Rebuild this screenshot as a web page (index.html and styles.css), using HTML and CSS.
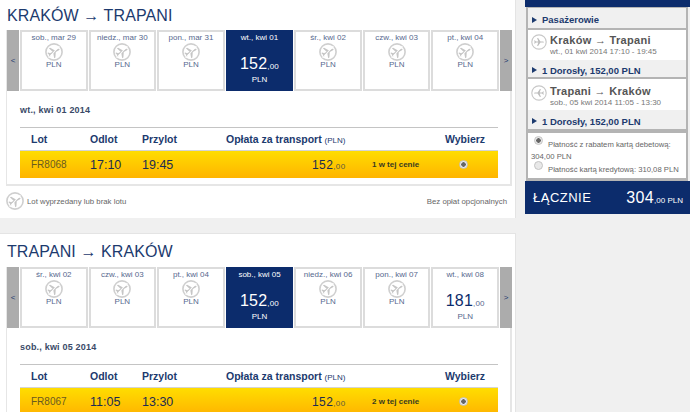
FILE: index.html
```html
<!DOCTYPE html>
<html lang="pl">
<head>
    <meta charset="UTF-8">
    <meta name="viewport" content="width=device-width, initial-scale=1.0">
    <title>Wybierz lot</title>
    <link rel="stylesheet" href="styles.css">
</head>
<body>
    <svg class="defs" width="0" height="0">
        <symbol id="plane-off" viewBox="0 0 18 18">
            <circle cx="9" cy="9" r="8.1" fill="#fff" stroke="#cfcfcf" stroke-width="1.6"/>
            <g transform="rotate(-28 9 9)">
                <path d="M2.6 6.8 L3.8 6.8 L5 8.2 L7.8 8.2 L6.2 3.4 L7.6 3.4 L10.6 8.2 L13.8 8.2 C15.8 8.3 15.8 9.8 13.8 9.8 L10.6 9.8 L7.6 14.6 L6.2 14.6 L7.8 9.8 L5 9.8 L3.8 11.2 L2.6 11.2 L3.4 9 Z" fill="#c6c6c6"/>
            </g>
            <path d="M3.6 15 L14.4 3" stroke="#fff" stroke-width="1.1"/>
        </symbol>
        <symbol id="plane-right" viewBox="0 0 18 18">
            <circle cx="9" cy="9" r="8.1" fill="#fff" stroke="#c8c8c8" stroke-width="1.3"/>
            <path d="M3.4 7.2 L4.4 7.2 L5.6 8.3 L8.2 8.3 L6.9 4.4 L8 4.4 L10.6 8.3 L13.4 8.3 C15 8.4 15 9.7 13.4 9.7 L10.6 9.7 L8 13.6 L6.9 13.6 L8.2 9.7 L5.6 9.7 L4.4 10.8 L3.4 10.8 L4.2 9 Z" fill="#bdbdbd"/>
        </symbol>
        <symbol id="plane-left" viewBox="0 0 18 18">
            <circle cx="9" cy="9" r="8.1" fill="#fff" stroke="#c8c8c8" stroke-width="1.3"/>
            <path d="M14.6 7.2 L13.6 7.2 L12.4 8.3 L9.8 8.3 L11.1 4.4 L10 4.4 L7.4 8.3 L4.6 8.3 C3 8.4 3 9.7 4.6 9.7 L7.4 9.7 L10 13.6 L11.1 13.6 L9.8 9.7 L12.4 9.7 L13.6 10.8 L14.6 10.8 L13.8 9 Z" fill="#bdbdbd"/>
        </symbol>
    </svg>

    <div class="page">
        <div class="main">
            <section class="leg">
                <h1>KRAKÓW → TRAPANI</h1>
                <div class="box">
                    <div class="days">
                        <a class="nav">&lt;</a>
                        <div class="day"><span class="date">sob., mar 29</span><svg class="off"><use href="#plane-off"/></svg><span class="cur">PLN</span></div>
                        <div class="day"><span class="date">niedz., mar 30</span><svg class="off"><use href="#plane-off"/></svg><span class="cur">PLN</span></div>
                        <div class="day"><span class="date">pon., mar 31</span><svg class="off"><use href="#plane-off"/></svg><span class="cur">PLN</span></div>
                        <div class="day selected"><span class="date">wt., kwi 01</span><span class="price">152<small>,00</small></span><span class="cur">PLN</span></div>
                        <div class="day"><span class="date">śr., kwi 02</span><svg class="off"><use href="#plane-off"/></svg><span class="cur">PLN</span></div>
                        <div class="day"><span class="date">czw., kwi 03</span><svg class="off"><use href="#plane-off"/></svg><span class="cur">PLN</span></div>
                        <div class="day"><span class="date">pt., kwi 04</span><svg class="off"><use href="#plane-off"/></svg><span class="cur">PLN</span></div>
                        <a class="nav">&gt;</a>
                    </div>
                    <div class="flights">
                        <h3>wt., kwi 01 2014</h3>
                        <div class="row head">
                            <span class="c-lot">Lot</span>
                            <span class="c-dep">Odlot</span>
                            <span class="c-arr">Przylot</span>
                            <span class="c-fare">Opłata za transport <em>(PLN)</em></span>
                            <span class="c-pick">Wybierz</span>
                        </div>
                        <div class="row flight">
                            <span class="c-lot">FR8068</span>
                            <span class="c-dep">17:10</span>
                            <span class="c-arr">19:45</span>
                            <span class="c-amount">152<small>,00</small></span>
                            <span class="c-left">1 w tej cenie</span>
                            <span class="c-radio"><i class="radio on"></i></span>
                        </div>
                    </div>
                </div>
                <div class="legend">
                    <span class="legend-item"><svg class="off"><use href="#plane-off"/></svg>Lot wyprzedany lub brak lotu</span>
                    <span>Bez opłat opcjonalnych</span>
                </div>
            </section>

            <section class="leg">
                <h1>TRAPANI → KRAKÓW</h1>
                <div class="box">
                    <div class="days">
                        <a class="nav">&lt;</a>
                        <div class="day"><span class="date">śr., kwi 02</span><svg class="off"><use href="#plane-off"/></svg><span class="cur">PLN</span></div>
                        <div class="day"><span class="date">czw., kwi 03</span><svg class="off"><use href="#plane-off"/></svg><span class="cur">PLN</span></div>
                        <div class="day"><span class="date">pt., kwi 04</span><svg class="off"><use href="#plane-off"/></svg><span class="cur">PLN</span></div>
                        <div class="day selected"><span class="date">sob., kwi 05</span><span class="price">152<small>,00</small></span><span class="cur">PLN</span></div>
                        <div class="day"><span class="date">niedz., kwi 06</span><svg class="off"><use href="#plane-off"/></svg><span class="cur">PLN</span></div>
                        <div class="day"><span class="date">pon., kwi 07</span><svg class="off"><use href="#plane-off"/></svg><span class="cur">PLN</span></div>
                        <div class="day"><span class="date">wt., kwi 08</span><span class="price">181<small>,00</small></span><span class="cur">PLN</span></div>
                        <a class="nav">&gt;</a>
                    </div>
                    <div class="flights">
                        <h3>sob., kwi 05 2014</h3>
                        <div class="row head">
                            <span class="c-lot">Lot</span>
                            <span class="c-dep">Odlot</span>
                            <span class="c-arr">Przylot</span>
                            <span class="c-fare">Opłata za transport <em>(PLN)</em></span>
                            <span class="c-pick">Wybierz</span>
                        </div>
                        <div class="row flight">
                            <span class="c-lot">FR8067</span>
                            <span class="c-dep">11:05</span>
                            <span class="c-arr">13:30</span>
                            <span class="c-amount">152<small>,00</small></span>
                            <span class="c-left">2 w tej cenie</span>
                            <span class="c-radio"><i class="radio on"></i></span>
                        </div>
                    </div>
                </div>
            </section>
        </div>

        <aside class="side">
            <div class="side-top"></div>
            <div class="side-box">
                <div class="bar first"><span class="tri"></span>Pasażerowie</div>
                <div class="trip">
                    <svg class="trip-icon"><use href="#plane-right"/></svg>
                    <div>
                        <div class="trip-name">Kraków → Trapani</div>
                        <div class="trip-time">wt., 01 kwi 2014 17:10 - 19:45</div>
                    </div>
                </div>
                <div class="bar"><span class="tri"></span>1 Dorosły, 152,00 PLN</div>
                <div class="trip back">
                    <svg class="trip-icon"><use href="#plane-left"/></svg>
                    <div>
                        <div class="trip-name">Trapani → Kraków</div>
                        <div class="trip-time">sob., 05 kwi 2014 11:05 - 13:30</div>
                    </div>
                </div>
                <div class="bar last"><span class="tri"></span>1 Dorosły, 152,00 PLN</div>
                <div class="pay">
                    <div class="pay-opt"><i class="radio on"></i>Płatność z rabatem kartą debetową: 304,00 PLN</div>
                    <div class="pay-opt"><i class="radio"></i>Płatność kartą kredytową: 310,08 PLN</div>
                </div>
            </div>
            <div class="total">
                <span class="total-label">ŁĄCZNIE</span>
                <span class="total-sum">304<small>,00 PLN</small></span>
            </div>
        </aside>
    </div>
</body>
</html>
```

FILE: styles.css
```css
* {
    box-sizing: border-box;
}
html, body {
    margin: 0;
    height: 100%;
}
body {
    background-color: #f0f0f0;
    font-family: "Liberation Sans", Arial, sans-serif;
    color: #0c2c6c;
    overflow: hidden;
}
.defs {
    display: block;
    height: 0;
}
.page {
    display: flex;
    gap: 9px;
    align-items: flex-start;
    height: 412px;
    overflow: hidden;
}
.main {
    width: 516px;
    height: 412px;
    flex: none;
    display: flex;
    flex-direction: column;
    gap: 15px;
    overflow: hidden;
}
.leg {
    background-color: #ffffff;
    border-right: 1px solid #e4e4e4;
    height: 218px;
    flex: none;
    padding: 0 3px 0 6px;
}
.leg + .leg {
    border-top: 1px solid #e4e4e4;
    height: 179px;
    overflow: hidden;
}
h1 {
    margin: 0;
    height: 30px;
    padding: 7px 0 0 1px;
    font-size: 16px;
    line-height: 18px;
    letter-spacing: .1px;
    font-weight: normal;
    color: #1c3a6e;
}
.leg + .leg h1 {
    height: 33px;
    padding-top: 9px;
}
.box {
    border: 2px solid #e6e6e6;
    border-top: none;
    border-left-width: 1px;
    height: 156px;
}
.days {
    display: flex;
    height: 61px;
    gap: 1px;
    margin-right: -2px;
}
.nav {
    width: 12px;
    flex: none;
    background-color: #acacac;
    display: flex;
    align-items: center;
    justify-content: center;
    font-size: 8px;
    color: #1c3a6e;
}
.day {
    flex: 1;
    min-width: 0;
    border: 2px solid #dcdcdc;
    background-color: #ffffff;
    display: flex;
    flex-direction: column;
    align-items: center;
    font-size: 8px;
    line-height: 10px;
    color: #56688e;
    padding-top: 1px;
}
.date {
    height: 11px;
    white-space: nowrap;
}
.off {
    width: 18px;
    height: 18px;
    flex: none;
}
.day .off {
    margin-top: -1px;
}
.cur {
    margin-top: -1px;
    line-height: 10px;
}
.price {
    margin-top: 10px;
    height: 20px;
    font-size: 16px;
    line-height: 20px;
    letter-spacing: .2px;
    color: #0c2c6c;
}
.price small {
    font-size: 8px;
    color: #56688e;
}
.price + .cur {
    margin-top: 1px;
}
.selected {
    background-color: #0c2c6c;
    border-color: #0c2c6c;
    color: #ffffff;
}
.selected .price, .selected .price small {
    color: #ffffff;
}
.flights {
    padding: 0 12px 0 13px;
}
h3 {
    margin: 0;
    padding-top: 13px;
    height: 36px;
    font-size: 9px;
    line-height: 12px;
    letter-spacing: .2px;
    font-weight: bold;
    color: #3a4a68;
}
.row {
    display: flex;
    align-items: center;
    white-space: nowrap;
}
.row.head {
    border-top: 1px solid #c4c4c4;
    border-bottom: 1px solid #d4d4d4;
    height: 24px;
    font-size: 10.5px;
    font-weight: bold;
    color: #1c3a6e;
}
.row.head em {
    font-style: normal;
    font-weight: normal;
    font-size: 8px;
}
.flight {
    height: 27px;
    background: linear-gradient(#ffdd00, #ffb400);
    color: #3a3a2a;
}
.c-lot {
    width: 70px;
    padding-left: 11px;
}
.c-dep {
    width: 52px;
}
.c-arr {
    width: 84px;
}
.c-fare {
    width: 219px;
}
.flight .c-lot {
    font-size: 10px;
    color: #6a5a20;
}
.flight .c-dep, .flight .c-arr {
    font-size: 12.5px;
    color: #1c2c50;
}
.c-amount {
    width: 146px;
    padding-left: 86px;
    font-size: 12px;
    letter-spacing: .4px;
    color: #1c2c50;
    white-space: nowrap;
}
.c-amount small {
    font-size: 8px;
    color: #5a5a40;
}
.c-left {
    width: 67px;
    font-size: 8px;
    font-weight: bold;
    color: #3a3a20;
}
.c-radio {
    margin-left: 20px;
    display: flex;
}
.radio {
    display: inline-block;
    flex: none;
    width: 9px;
    height: 9px;
    border-radius: 50%;
    border: 1px solid #c4c4c4;
    background-color: #e8e8e8;
}
.radio.on {
    background: radial-gradient(circle, #666666 0 2px, #e8e8e8 2.5px);
}
.legend {
    display: flex;
    justify-content: space-between;
    align-items: center;
    padding: 6px 5px 0 0;
    font-size: 7.8px;
    color: #666666;
}
.legend-item {
    display: flex;
    align-items: center;
    gap: 3px;
}
.side {
    width: 165px;
    flex: none;
}
.side-top {
    height: 7px;
    background-color: #0c2c6c;
}
.side-box {
    margin: 0 2px 0 1px;
    padding: 1px 2px 3px;
    background-color: #b4b4b4;
    display: flex;
    flex-direction: column;
}
.bar {
    height: 19px;
    background-color: #f0f0f0;
    border-bottom: 2px solid #b4b4b4;
    display: flex;
    align-items: center;
    padding: 3px 0 0 4px;
    font-size: 9.5px;
    font-weight: bold;
    color: #1c3a6e;
}
.bar.first {
    height: 22px;
}
.bar.last {
    height: 23px;
    border-bottom-width: 4px;
}
.tri {
    width: 0;
    height: 0;
    border-left: 5px solid #1c3a6e;
    border-top: 3px solid transparent;
    border-bottom: 3px solid transparent;
    margin-right: 5px;
}
.trip {
    background-color: #ffffff;
    height: 30px;
    display: flex;
    gap: 3px;
    padding: 4px 0 0 3px;
}
.trip.back {
    height: 31px;
    padding-top: 6px;
}
.trip-icon {
    width: 16px;
    height: 16px;
    flex: none;
}
.trip-name {
    font-size: 11px;
    line-height: 12px;
    letter-spacing: .3px;
    font-weight: bold;
    color: #555555;
    white-space: nowrap;
}
.trip-time {
    font-size: 8px;
    line-height: 10px;
    margin-top: 1px;
    color: #777777;
    white-space: nowrap;
}
.pay {
    background-color: #ffffff;
    padding: 6px 3px 0 3px;
    height: 45px;
    font-size: 7.7px;
    line-height: 12px;
    color: #666666;
}
.pay-opt + .pay-opt {
    margin-top: 1px;
}
.pay-opt .radio {
    margin: -6px 5px 0 3px;
    vertical-align: 2px;
}
.total {
    height: 33px;
    background-color: #0c2c6c;
    display: flex;
    justify-content: space-between;
    align-items: center;
    padding: 0 7px 0 8px;
    color: #ffffff;
}
.total-label {
    font-size: 13px;
    letter-spacing: .5px;
}
.total-sum {
    font-size: 16px;
    letter-spacing: .4px;
}
.total-sum small {
    font-size: 8px;
    letter-spacing: 0;
}
```
